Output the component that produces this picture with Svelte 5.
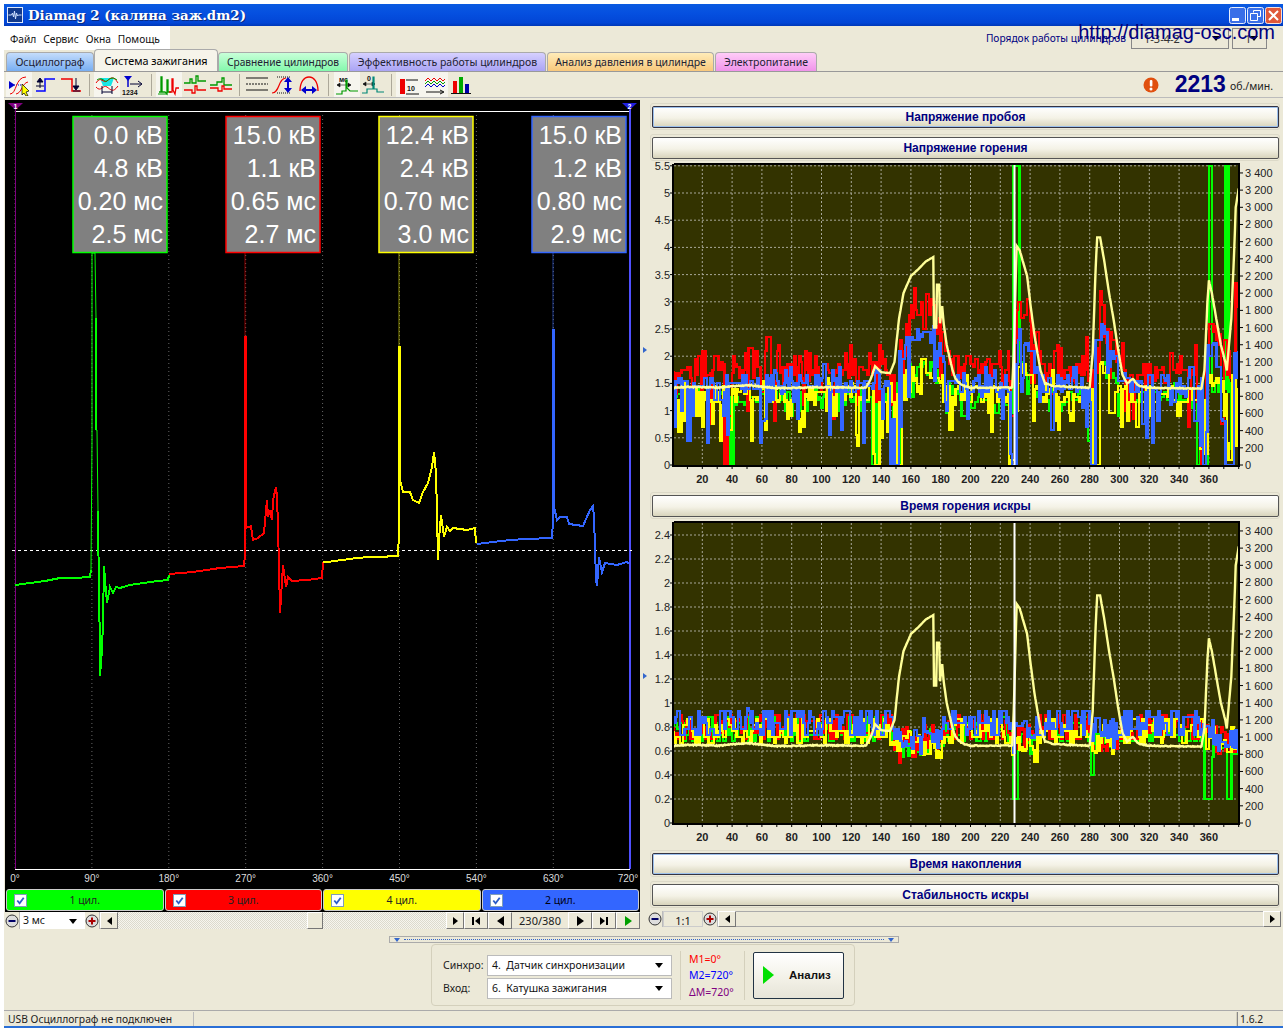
<script>
  function rng(seed) {
    let a = seed;
    return () => {
      a |= 0; a = (a + 0x6d2b79f5) | 0;
      let t = Math.imul(a ^ (a >>> 15), 1 | a);
      t = (t + Math.imul(t ^ (t >>> 7), 61 | t)) ^ t;
      return ((t ^ (t >>> 14)) >>> 0) / 4294967296;
    };
  }
  const rpmPts = [[1,900],[10,910],[30,900],[50,930],[70,895],[100,905],[130,900],[133,1000],[136,1150],[140,1080],[146,1070],[149,1200],[152,1700],[155,2000],[160,2200],[165,2280],[170,2370],[175,2420],[175.5,1600],[177,1600],[177.5,2100],[179,2100],[179.5,1650],[181,1850],[182,1650],[184,1400],[188,1100],[190,1000],[194,930],[200,900],[228,900],[229,1300],[231,2550],[233,2500],[238,2200],[240,1900],[243,1500],[247,1100],[250,950],[255,920],[280,900],[282,1300],[284,2300],[285,2650],[287,2650],[290,2350],[293,2000],[296,1700],[299,1350],[302,1050],[305,950],[309,1000],[313,920],[320,900],[355,890],[357,1100],[359,1900],[360,2150],[362,2000],[365,1700],[368,1400],[371,1200],[372,1100],[375,1700],[377,2500],[378,3000],[380,3220]];
  function rpm(i) {
    for (let k = 1; k < rpmPts.length; k++) {
      const [a, b] = rpmPts[k - 1], [c, d] = rpmPts[k];
      if (i <= c) return b + ((d - b) * (i - a)) / (c - a || 1);
    }
    return 3220;
  }
  const px = (i) => +(673.5 + 1.49 * i).toFixed(1);
  const inR = (i, rs) => rs.some(([a, b]) => i >= a && i <= b);

  function gen1(seed, s) {
    const r = rng(seed);
    let d = 'M' + px(1) + ' ' + (465 - s.base * 54.4).toFixed(0);
    let v = s.base;
    for (let i = 1; i <= 380; i++) {
      if (i === 1 || r() < 0.72) {
        v = s.base + (r() - 0.5) * s.spread;
        if (r() < s.upP) v += r() * s.up;
        const rough = inR(i, [[128, 156], [278, 287], [225, 231], [352, 358], [368, 380]]);
        if (r() < (rough ? s.downP * 2.4 : s.downP)) v -= r() * (rough ? 1.6 : s.down);
        v += (Math.max(0, rpm(i) - 1000) / 1500) * s.hump;
      }
      let out = v;
      for (const [a, b, val] of s.set) if (i >= a && i <= b) out = val;
      out = Math.max(0, Math.min(5.5, out));
      const y = (465 - Math.round(out * 20) / 20 * 54.4).toFixed(0);
      d += 'H' + px(i) + 'V' + y;
    }
    return d;
  }
  function gen2(seed, s) {
    const r = rng(seed);
    let d = 'M' + px(1) + ' ' + (823 - s.base * 120).toFixed(0);
    let v = s.base;
    for (let i = 1; i <= 380; i++) {
      if (r() < 0.7) {
        v = s.base + (Math.floor(r() * 5) - 2) * 0.05;
        if (inR(i, [[146, 180], [228, 243], [356, 380]])) v -= 0.04 + r() * 0.12;
        if (inR(i, [[280, 298]])) v -= 0.05 + r() * 0.07;
      }
      let out = v;
      for (const [a, b, val] of s.set) if (i >= a && i <= b) out = val;
      d += 'H' + px(i) + 'V' + (823 - out * 120).toFixed(0);
    }
    return d;
  }
  const rpmPath = (zero) => {
    const r = rng(91);
    let d = '';
    for (let i = 1; i <= 380; i += 0.5) {
      const flat = rpm(i) < 1000 ? (r() - 0.5) * 12 : 0;
      d += (d ? 'L' : 'M') + px(i) + ' ' + (zero - (rpm(i) + flat) / 200 * 17.18).toFixed(1);
    }
    return d;
  };
  const chart1 = [
    { c: '#00ff00', d: gen1(3, { base: 1.25, spread: 0.3, up: 0.2, upP: 0.1, down: 0.4, downP: 0.1, hump: 0.55, set: [[39, 40, 0], [229, 232, 5.5], [360, 361, 5.5], [371, 372, 5.5], [282, 286, 0]] }) },
    { c: '#ff0000', d: gen1(11, { base: 1.72, spread: 0.35, up: 0.5, upP: 0.35, down: 1.0, downP: 0.2, hump: 1.25, set: [[35, 36, 0], [282, 283, 0]] }) },
    { c: '#ffff00', d: gen1(23, { base: 1.3, spread: 0.35, up: 0.3, upP: 0.15, down: 0.8, downP: 0.22, hump: 0.45, set: [[283, 286, 0], [136, 138, 0], [152, 153, 0], [373, 375, 0.1]] }) },
    { c: '#3366ff', d: gen1(37, { base: 1.5, spread: 0.35, up: 0.3, upP: 0.15, down: 1.1, downP: 0.22, hump: 1.0, set: [[228, 230, 0], [149, 151, 0], [281, 283, 0], [356, 356, 0], [371, 376, 0]] }) }
  ];
  const chart2 = [
    { c: '#00ff00', d: gen2(5, { base: 0.78, set: [[229, 231, 0.2], [357, 361, 0.2], [372, 374, 0.2], [281, 282, 0.4]] }) },
    { c: '#ff0000', d: gen2(13, { base: 0.8, set: [[152, 152, 0.5]] }) },
    { c: '#ffff00', d: gen2(29, { base: 0.77, set: [] }) },
    { c: '#3366ff', d: gen2(41, { base: 0.83, set: [[50, 50, 0.96]] }) }
  ];
  const rpmA = rpmPath(465), rpmB = rpmPath(823);

  const xLabels = Array.from({ length: 18 }, (_, k) => 20 + k * 20);
  const xTicks = Array.from({ length: 38 }, (_, k) => 10 + k * 10);
  const rLabels = Array.from({ length: 18 }, (_, k) => {
    const v = k * 200;
    return { v, t: v >= 1000 ? Math.floor(v / 1000) + ' ' + String(v % 1000).padStart(3, '0') : String(v) };
  });
  const left1 = ['0', '0.5', '1', '1.5', '2', '2.5', '3', '3.5', '4', '4.5', '5', '5.5'];
  const left2 = ['0', '0.2', '0.4', '0.6', '0.8', '1', '1.2', '1.4', '1.6', '1.8', '2', '2.2', '2.4'];
  const charts = [
    { box: '650 160 633 330', top: 165, zero: 465, series: chart1, rp: rpmA, labels: left1, step: 27.2 },
    { box: '650 518 633 330', top: 523, zero: 823, series: chart2, rp: rpmB, labels: left2, step: 24 }
  ];

  const degs = [0, 90, 180, 270, 360, 450, 540, 630, 720];
  const degX = (k) => 15 + k * 76.9;
  const boxes = [
    { x: 73, c: '#00ff00', l: ['0.0 кВ', '4.8 кВ', '0.20 мс', '2.5 мс'] },
    { x: 226, c: '#ff0000', l: ['15.0 кВ', '1.1 кВ', '0.65 мс', '2.7 мс'] },
    { x: 379, c: '#ffff00', l: ['12.4 кВ', '2.4 кВ', '0.70 мс', '3.0 мс'] },
    { x: 532, c: '#3366ff', l: ['15.0 кВ', '1.2 кВ', '0.80 мс', '2.9 мс'] }
  ];
  const traces = [
    { c: '#00ff00', o: 1, thin: '91,570 92,440 92,253 95,253 96,318 96,430 97,430 98,511', p: 'M15,585 30,583 45,581 60,578 75,578 90,577 91,570 M96,318 96,430 M98,511 99,600 100,643 100,676 102,650 103,620 104,566 105,580 107,603 110,587 113,593 116,587 120,588 130,585 150,582 168,580 169,575' },
    { c: '#ff0000', o: 0.55, thin: '245,337 245,253', p: 'M169,574 193,572 220,568 244,566 245,555 245,337 246,337 246,507 246,528 251,526 253,540 258,538 264,533 267,500 268,517 270,510 272,520 273,500 276,487 277,497 278,527 279,566 280,613 283,565 286,587 288,577 292,581 307,580 322,578 323,562' },
    { c: '#ffff00', o: 0.55, thin: '399,347 399,253', p: 'M323,562 327,562 357,558 370,557 383,557 392,556 398,556 399,533 399,347 400,347 400,480 403,492 410,492 413,500 419,503 423,492 428,483 432,467 434,452 436,473 437,513 438,560 439,540 441,515 444,537 447,527 450,531 453,528 467,530 475,528 476,543' },
    { c: '#3366ff', o: 0.55, thin: '553,330 553,253', p: 'M477,544 493,542 510,540 527,539 552,538 553,520 553,330 554,330 554,507 557,520 560,517 567,517 569,524 583,526 590,510 593,506 594,517 595,547 596,580 597,586 599,557 602,572 605,563 617,565 627,562 629,564' }
  ];
  const channels = [
    { n: '1 цил.', cls: 'g' }, { n: '3 цил.', cls: 'r' }, { n: '4 цил.', cls: 'y' }, { n: '2 цил.', cls: 'b' }
  ];
</script>

<div class="win">
  <div class="title">
    <svg class="appicon" viewBox="0 0 16 16"><rect x=".5" y=".5" width="15" height="15" fill="#123a8c" stroke="#dfe8fa"/><path d="M1.500 8h3l1-2 1 4 1-6 1 8 1-6 1 3 1-1h3" fill="none" stroke="#cfe0ff"/></svg>
    <span class="ttext">Diamag 2 (калина заж.dm2)</span>
    <span class="wbtns">
      <svg class="wb" viewBox="0 0 17 17"><rect x=".5" y=".5" width="16" height="16" rx="2" fill="#3a6fe8" stroke="#e8eefc"/><rect x="3" y="11" width="7" height="3" fill="#fff"/></svg>
      <svg class="wb" viewBox="0 0 17 17"><rect x=".5" y=".5" width="16" height="16" rx="2" fill="#3a6fe8" stroke="#e8eefc"/><path d="M6.500 5.500V3.500h7v6h-3M3.500 6.500h7v7h-7z" fill="none" stroke="#fff"/></svg>
      <svg class="wb" viewBox="0 0 17 17"><rect x=".5" y=".5" width="16" height="16" rx="2" fill="#e0583a" stroke="#f6e0da"/><path d="M4 4l9 9M13 4l-9 9" stroke="#fff" stroke-width="2"/></svg>
    </span>
  </div>

  <div class="menurow">
    <div class="menu"><span>Файл</span><span>Сервис</span><span>Окна</span><span>Помощь</span></div>
    <div class="order">
      <span class="olabel">Порядок работы цилиндров</span>
      <span class="osel o1">1-3-4-2<b class="arr"></b></span>
      <span class="osel o2">1<b class="arr"></b></span>
    </div>
  </div>

  <div class="tabs">
    <span class="tab t1">Осциллограф</span>
    <span class="tab t2">Система зажигания</span>
    <span class="tab t3">Сравнение цилиндров</span>
    <span class="tab t4">Эффективность работы цилиндров</span>
    <span class="tab t5">Анализ давления в цилиндре</span>
    <span class="tab t6">Электропитание</span>
  </div>

  <div class="toolbar">
    <span class="tb on"><svg viewBox="0 0 24 22"><path d="M3 11h13" stroke="#00c" stroke-dasharray="1 1"/><path d="M2 7v8l6-4z" fill="#00c"/><path d="M3 20C10 20 8 3 19 3M9 20C15 19 15 9 21 8" fill="none" stroke="#e00"/><path d="M15 10l7 7-3 1 2 4-2 0-2-3-2 2z" fill="#ff0" stroke="#000" stroke-width=".7"/></svg></span>
    <span class="tb"><svg viewBox="0 0 24 22"><path d="M3 17h9V5h10" fill="none" stroke="#00f" stroke-width="1.500"/><path d="M7 14V6M4 8l3-4 3 4z" stroke="#003" fill="#003"/><path d="M3 12h8" stroke="#003"/></svg></span>
    <span class="tb"><svg viewBox="0 0 24 22"><path d="M2 5h11v12h9" fill="none" stroke="#e00" stroke-width="1.500"/><path d="M17 4v9M14 12l3 4 3-4z" stroke="#003" fill="#003"/><path d="M14 17h7" stroke="#003"/></svg></span>
    <i class="sep"></i>
    <span class="tb on"><svg viewBox="0 0 24 22"><path d="M5 4h14l-3 8h-8z" fill="#19e6e6"/><path d="M1 9C6 1 8 10 12 7s6-6 11 2" fill="none" stroke="#e00"/><path d="M1 13c5 6 7-3 11 0s6 6 11-1" fill="none" stroke="#e00"/><path d="M2 6c5-4 8 3 10 1s5-5 10-1" fill="none" stroke="#090"/><path d="M7 12v8M17 12v8M7 18h10" stroke="#003"/></svg></span>
    <span class="tb"><svg viewBox="0 0 24 22"><path d="M3 2h8L7 7z" fill="#00c"/><path d="M7 6v7" stroke="#00c" stroke-width="1.500"/><path d="M9 10h11M17 7l4 3-4 3" stroke="#003" fill="none"/><text x="1" y="20.500" class="icotxt">1234</text></svg></span>
    <i class="sep"></i>
    <span class="tb on"><svg viewBox="0 0 24 22"><path d="M2 18h2V3h1v15h3l2 2V6h1v12h3" fill="none" stroke="#090" stroke-width="1.300"/><path d="M12 18h3V5h1v11l2 4 1-6h3" fill="none" stroke="#e00" stroke-width="1.300"/><path d="M1 20h9" stroke="#090"/></svg></span>
    <span class="tb"><svg viewBox="0 0 24 22"><path d="M1 9h6V5h2v4h4V2h2v5h8" fill="none" stroke="#090" stroke-width="1.300"/><path d="M1 16h8v3h3v-7h2v4h9" fill="none" stroke="#e00" stroke-width="1.300"/></svg></span>
    <span class="tb"><svg viewBox="0 0 24 22"><path d="M1 11h7v-3h5V4h2v7h8" fill="none" stroke="#090" stroke-width="1.300"/><path d="M1 14h8v3h4v-5h2v3h8" fill="none" stroke="#e00" stroke-width="1.300"/></svg></span>
    <i class="sep"></i>
    <span class="tb"><svg viewBox="0 0 24 22"><path d="M1 4h22M1 16h22" stroke="#111"/><path d="M1 10h22" stroke="#111" stroke-dasharray="2 1"/></svg></span>
    <span class="tb"><svg viewBox="0 0 24 22"><path d="M1 19c8 0 6-15 14-15" fill="none" stroke="#e00" stroke-width="1.200"/><path d="M6 3h14M6 19h14" stroke="#111" stroke-dasharray="1 1"/><path d="M17 6v10" stroke="#00c" stroke-width="2"/><path d="M13 8l4-5 4 5zM13 14l4 5 4-5z" fill="#00c"/></svg></span>
    <span class="tb"><svg viewBox="0 0 24 22"><path d="M3 17C3 8 7 3 12 3s9 5 9 14" fill="none" stroke="#e00" stroke-width="1.300"/><path d="M6 16h12" stroke="#00c" stroke-width="2"/><path d="M9 12l-5 4 5 4zM15 12l5 4-5 4z" fill="#00c"/></svg></span>
    <i class="sep wide"></i>
    <span class="tb on"><svg viewBox="0 0 24 22"><text x="4" y="8" class="icotxt">мс</text><path d="M2 11h14M2 11l3-2v4zM16 11l-3-2v4z" stroke="#111" fill="#111" stroke-width=".6"/><path d="M1 20h6v-3h4V6h1v8l3 3h8" fill="none" stroke="#090" stroke-width="1.200"/></svg></span>
    <span class="tb"><svg viewBox="0 0 24 22"><text x="6" y="7" class="icotxt">0</text><path d="M2 10h12M2 10l3-2v4zM14 10l-3-2v4z" stroke="#111" fill="#111" stroke-width=".6"/><path d="M1 19h5v-4h6V3h1v12h3v3h7" fill="none" stroke="#087" stroke-width="1.200"/></svg></span>
    <i class="sep"></i>
    <span class="tb on"><svg viewBox="0 0 24 22"><rect x="3" y="5" width="5" height="15" fill="#e00"/><path d="M9 6h12M9 20h13" stroke="#111"/><text x="10" y="17" class="icotxt">10</text></svg></span>
    <span class="tb on"><svg viewBox="0 0 24 22"><path d="M2 7l3-3 3 3 3-3 3 3 3-3 3 3 2-2" fill="none" stroke="#e00"/><path d="M2 10l3-3 3 3 3-3 3 3 3-3 3 3 2-2" fill="none" stroke="#090"/><path d="M2 13l3-3 3 3 3-3 3 3 3-3 3 3 2-2" fill="none" stroke="#00c"/><path d="M3 18h17M17 16l4 2-4 2" fill="none" stroke="#111"/></svg></span>
    <span class="tb"><svg viewBox="0 0 24 22"><rect x="4" y="7" width="4" height="12" fill="#e00"/><rect x="10" y="3" width="4" height="16" fill="#0a0"/><rect x="16" y="10" width="4" height="9" fill="#00a"/><path d="M2 19.500h20" stroke="#111"/></svg></span>
    <span class="rpm">
      <svg class="alert" viewBox="0 0 16 16"><circle cx="8" cy="8" r="7.500" fill="#e0500f"/><rect x="6.800" y="3" width="2.600" height="6.500" rx="1" fill="#fff"/><circle cx="8" cy="12" r="1.500" fill="#fff"/></svg>
      <b>2213</b><span>об./мин.</span>
    </span>
  </div>

  <div class="main">
    <div class="leftcol">
      <svg class="scope" viewBox="5 100 635 789">
        <rect x="5" y="100" width="635" height="789" fill="#000"/>
        {#each degs as d, k}
          <path d="M{degX(k)} 111V869" class="gridv"/>
          <text x={k === 8 ? 628 : degX(k)} y="882" class="deg">{d}°</text>
        {/each}
        <path d="M15 111.500H630M15 869.500H630" stroke="#fff" fill="none"/>
        <path d="M15.500 103V869" stroke="#800080"/>
        <path d="M630 103V869" stroke="#5050ff" stroke-width="2"/>
        <path d="M8 103h15l-7.500 7z" fill="#800080"/>
        <text x="15.500" y="108.500" class="mk">1</text>
        <path d="M622 103h15l-7.500 7z" fill="#2020e0"/>
        <text x="629.500" y="108.500" class="mk">2</text>
        <path d="M12 550.500H632" stroke="#fff" stroke-dasharray="3 3"/>
        {#each traces as t}
          <polyline points={t.thin} fill="none" stroke={t.c} stroke-width="1" opacity={t.o}/>
          <path d={t.p} fill="none" stroke={t.c} stroke-width="2" shape-rendering="crispEdges"/>
        {/each}
        {#each boxes as b}
          <rect x={b.x} y="116.500" width="94" height="136" fill="#808080" stroke={b.c} stroke-width="1.500"/>
          {#each b.l as line, k}
            <text x={b.x + 90} y={144 + k * 33} class="val">{line}</text>
          {/each}
        {/each}
      </svg>
      <div class="channels">
        {#each channels as ch}
          <span class="ch {ch.cls}">
            <span class="check"><svg viewBox="0 0 12 12"><path d="M2.500 6l2.500 3 4.500-6" fill="none" stroke="#2a5cc8" stroke-width="2"/></svg></span>
            <span class="chn">{ch.n}</span>
          </span>
        {/each}
      </div>
      <div class="scrollrow">
        <span class="rnd"><svg viewBox="0 0 14 14"><circle cx="7" cy="7" r="6" fill="#ddd" stroke="#333"/><path d="M3.500 7h7" stroke="#006" stroke-width="2"/></svg></span>
        <span class="tsel">3 мс<b class="arr"></b></span>
        <span class="rnd"><svg viewBox="0 0 14 14"><circle cx="7" cy="7" r="6" fill="#ddd" stroke="#333"/><path d="M3.500 7h7M7 3.500v7" stroke="#a00" stroke-width="2"/></svg></span>
        <span class="sbtn sa"><i class="tl"></i></span>
        <span class="track"><span class="thumb"></span></span>
        <span class="sbtn sa"><i class="tr"></i></span>
        <span class="sbtn nav"><i class="bar"></i><i class="tl"></i></span>
        <span class="sbtn nav"><i class="tl big"></i></span>
        <span class="counter">230/380</span>
        <span class="sbtn nav"><i class="tr big"></i></span>
        <span class="sbtn nav"><i class="tr"></i><i class="bar"></i></span>
        <span class="sbtn nav"><i class="tr big gr"></i></span>
      </div>
    </div>

    <div class="vsplit"><i class="tr blue"></i><i class="tr blue"></i></div>

    <div class="rightcol">
      <div class="grp first"><div class="bar3d focus">Напряжение пробоя</div></div>
      <div class="grp"><div class="bar3d">Напряжение горения</div></div>
      {#each charts as ch, ci}
        <svg class="chart" viewBox={ch.box}>
          <rect x="675" y={ch.top} width="565" height="300" fill="#333300"/>
          {#each xLabels as v}
            <path d="M{px(v)} {ch.top}V{ch.zero}" class="grid"/>
            <text x={px(v)} y={ch.zero + 18} class="xl">{v}</text>
          {/each}
          {#each ch.labels as l, k}
            {#if k > 0}<path d="M675 {ch.zero - k * ch.step}H1240" class="grid"/>{/if}
            <text x="671" y={ch.zero - k * ch.step + 4} class="ll">{l}</text>
            <path d="M671 {ch.zero - k * ch.step}h4" stroke="#000"/>
          {/each}
          {#each xTicks as v}
            <path d="M{px(v)} {ch.zero}v4" stroke="#000"/>
          {/each}
          {#each ch.series as s}
            <path d={s.d} fill="none" stroke={s.c} stroke-width="2.500" shape-rendering="crispEdges"/>
          {/each}
          <path d={ch.rp} fill="none" stroke="#ffff99" stroke-width="2.400"/>
          <path d="M1015.500 {ch.top}V{ch.zero}" stroke="#fff" stroke-width="2"/>
          <path d="M675 {ch.top - 1}H1240V{ch.zero + 1}H674V{ch.top - 1}" fill="none" stroke="#000" stroke-width="2"/>
          {#each rLabels as r}
            <path d="M1240 {ch.zero - (r.v / 200) * 17.18}h4" stroke="#000"/>
            <text x="1246" y={ch.zero - (r.v / 200) * 17.18 + 4} class="rl">{r.t}</text>
          {/each}
        </svg>
        {#if ci === 0}
          <div class="grp"><div class="bar3d">Время горения искры</div></div>
        {/if}
      {/each}
      <div class="grp"><div class="bar3d focus">Время накопления</div></div>
      <div class="grp"><div class="bar3d">Стабильность искры</div></div>
      <div class="scrollrow rscroll">
        <span class="rnd"><svg viewBox="0 0 14 14"><circle cx="7" cy="7" r="6" fill="#ddd" stroke="#333"/><path d="M3.500 7h7" stroke="#006" stroke-width="2"/></svg></span>
        <span class="ratio">1:1</span>
        <span class="rnd"><svg viewBox="0 0 14 14"><circle cx="7" cy="7" r="6" fill="#ddd" stroke="#333"/><path d="M3.500 7h7M7 3.500v7" stroke="#a00" stroke-width="2"/></svg></span>
        <span class="sbtn sa"><i class="tl"></i></span>
        <span class="track plain"></span>
        <span class="sbtn sa"><i class="tr"></i></span>
      </div>
    </div>
  </div>

  <div class="hsplit"><i class="dn"></i><span class="dots"></span><i class="dn"></i></div>

  <div class="panelrow">
    <div class="panel">
      <div class="selects">
        <div class="srow"><label for="s1">Синхро:</label><span id="s1" class="pick">4.&nbsp; Датчик синхронизации<b class="arr"></b></span></div>
        <div class="srow"><label for="s2">Вход:</label><span id="s2" class="pick">6.&nbsp; Катушка зажигания<b class="arr"></b></span></div>
      </div>
      <div class="marks">
        <span class="m1">M1=0°</span>
        <span class="m2">M2=720°</span>
        <span class="m3">ΔM=720°</span>
      </div>
      <div class="go"><i class="play"></i><b>Анализ</b></div>
    </div>
  </div>

  <div class="status">
    <span class="s1">USB Осциллограф не подключен</span>
    <span class="s2"></span>
    <span class="s3">1.6.2</span>
  </div>

  <span class="wm">http://diamag-osc.com</span>
</div>

<style>
  :global(*) { box-sizing: border-box; }
  :global(body) { margin: 0; background: #fff; }
  .win {
    position: relative;
    margin: 4px 0 0 4px;
    width: 1279px;
    height: 1024px;
    display: flex;
    flex-direction: column;
    background: #ece9d8;
    border-bottom: 2px solid #2a6fd6;
    font: 11px "Noto Sans", sans-serif;
    color: #111;
    overflow: hidden;
  }
  .title {
    height: 22px;
    flex: none;
    display: flex;
    align-items: center;
    padding: 0 1px 0 3px;
    background: linear-gradient(#0a5ae0 0%, #0550e0 40%, #0246d6 85%, #0038b8 100%);
  }
  .appicon { width: 16px; height: 16px; }
  .ttext {
    margin-left: 5px;
    font: bold 13.400px "DejaVu Serif", serif;
    color: #fff;
    text-shadow: 1px 1px 0 #0a2a80;
  }
  .wbtns { margin-left: auto; display: flex; gap: 1px; }
  .wb { width: 17px; height: 17px; }

  .menurow { height: 24px; flex: none; display: flex; justify-content: space-between; }
  .menu {
    width: 166px;
    background: #fff;
    display: flex;
    gap: 7px;
    align-items: center;
    padding: 1px 0 0 6px;
    font-size: 10.200px;
  }
  .order { display: flex; align-items: center; padding-right: 16px; }
  .olabel { color: #000080; margin-right: 5px; font-size: 10.200px; }
  .osel {
    position: relative;
    height: 21px;
    background: #ece9d8;
    border: 1px solid #888;
    display: flex;
    align-items: center;
    padding-left: 12px;
    color: #333;
  }
  .o1 { width: 98px; margin-right: 3px; }
  .o2 { width: 35px; }
  .arr {
    position: absolute;
    right: 8px;
    top: 50%;
    margin-top: -2px;
    border: 4px solid transparent;
    border-top: 5px solid #000;
    border-bottom: 0;
  }

  .tabs { height: 22px; flex: none; display: flex; align-items: flex-end; padding-left: 2px; border-bottom: 1px solid #999; }
  .tab {
    height: 19px;
    border: 1px solid #aaa;
    border-bottom: 0;
    border-radius: 4px 4px 0 0;
    display: flex;
    align-items: center;
    justify-content: center;
    font-size: 10.500px;
    color: #223;
    flex: none;
  }
  .t1 { width: 88px; background: linear-gradient(#c4dcfb, #78aef2); }
  .t2 { width: 124px; height: 22px; background: #f6f4ea; color: #000; font-size: 10.800px; }
  .t3 { width: 130px; background: linear-gradient(#c8ffd8, #84f8ac); font-size: 10.200px; }
  .t4 { width: 197px; margin-left: 1px; background: linear-gradient(#d6d0ff, #aaa4f4); }
  .t5 { width: 167px; margin-left: 1px; background: linear-gradient(#ffecb8, #f8c87c); }
  .t6 { width: 102px; margin-left: 1px; background: linear-gradient(#ffccf8, #f094ea); }

  .toolbar {
    height: 26px;
    flex: none;
    display: flex;
    align-items: center;
    padding-left: 2px;
    border-bottom: 1px solid #bbb;
  }
  .tb { width: 26px; height: 25px; display: flex; align-items: center; justify-content: center; flex: none; }
  .tb svg { width: 24px; height: 22px; }
  .tb.on { background: #f6f5ee; }
  .sep { width: 10px; height: 22px; flex: none; background: linear-gradient(#aca899, #aca899) center / 1px 100% no-repeat; }
  .sep.wide { width: 12px; }
  .icotxt { font: bold 7px "Liberation Sans", sans-serif; fill: #111; }
  .rpm { margin-left: auto; display: flex; align-items: center; padding-right: 10px; }
  .alert { width: 16px; height: 16px; margin-right: 16px; }
  .rpm b { font: bold 23px "Liberation Sans", sans-serif; color: #000080; margin-right: 4px; }
  .rpm span { font-size: 10.500px; color: #222; margin-top: 3px; }

  .main { height: 833px; flex: none; margin-top: 2px; display: flex; }
  .leftcol { width: 635px; margin-left: 1px; flex: none; display: flex; flex-direction: column; }
  .scope { display: block; width: 635px; height: 789px; flex: none; }
  .gridv { stroke: #666; stroke-dasharray: 1 3; fill: none; }
  .deg { font: 10px "Liberation Sans", sans-serif; fill: #ddd; text-anchor: middle; }
  .mk { font: bold 7px "Liberation Sans", sans-serif; fill: #fff; text-anchor: middle; }
  .val { font: 25px "Liberation Sans", sans-serif; fill: #fff; text-anchor: end; }

  .channels { height: 23px; flex: none; background: #000; display: flex; padding: 0 1px; gap: 1px; }
  .ch {
    flex: 1;
    height: 22px;
    border: 1px solid #ccc;
    border-radius: 3px;
    display: flex;
    align-items: center;
    padding-left: 7px;
    font-size: 10.500px;
    color: #222;
  }
  .g { background: #00ff00; } .r { background: #ff0000; } .y { background: #ffff00; } .b { background: #3366ff; color: #001; }
  .check { width: 13px; height: 13px; background: #fff; border: 1px solid #7f9db9; display: flex; flex: none; }
  .chn { flex: 1; text-align: center; padding-right: 20px; }

  .scrollrow { height: 17px; flex: none; display: flex; align-items: stretch; }
  .rnd { width: 15px; flex: none; display: flex; align-items: center; justify-content: center; background: #ece9d8; border-right: 1px solid #bbb; }
  .rnd svg { width: 14px; height: 14px; }
  .tsel { position: relative; width: 65px; flex: none; background: #fff; padding: 1px 0 0 3px; font-size: 10.500px; }
  .sbtn {
    flex: none;
    display: flex;
    align-items: center;
    justify-content: center;
    gap: 1px;
    background: #ece9d8;
    border: 1px solid;
    border-color: #fff #777 #777 #fff;
  }
  .sa { width: 18px; }
  .nav { width: 24px; }
  .tl { border: 4px solid transparent; border-right: 5px solid #000; border-left: 0; }
  .tr { border: 4px solid transparent; border-left: 5px solid #000; border-right: 0; }
  .big { border-width: 5px; border-right-width: 7px; }
  .tr.big { border-width: 5px 0 5px 7px; }
  .gr { border-left-color: #00a000; }
  .bar { width: 2px; height: 8px; background: #000; }
  .track {
    flex: 1;
    display: flex;
    padding-left: 189px;
    background: repeating-conic-gradient(#f6f5ef 0 25%, #dcdacd 0 50%) 0 0 / 2px 2px;
  }
  .track.plain { background: #ece9d8; border: 1px solid #aaa; border-width: 1px 0; }
  .thumb { width: 16px; background: #ece9d8; border: 1px solid; border-color: #fff #777 #777 #fff; }
  .counter { width: 56px; flex: none; text-align: center; padding-top: 1px; color: #222; border-bottom: 1px solid #bbb; }

  .vsplit {
    width: 9px;
    flex: none;
    display: flex;
    flex-direction: column;
    align-items: center;
    justify-content: center;
    gap: 320px;
    padding-bottom: 8px;
  }
  .blue { border-left-color: #3366cc; border-width: 3px 0 3px 4px; }

  .rightcol { flex: 1; min-width: 0; display: flex; flex-direction: column; padding-top: 3px; padding-left: 1px; }
  .grp { height: 27px; flex: none; border: 1px solid #dcd9c8; border-radius: 3px; padding: 2px 0 0 1px; margin: 2px 3px 2px 0; width: 630px; }
  .grp + .chart { margin-top: -3px; }
  .first { margin-top: 0; }
  .bar3d {
    height: 22px;
    border: 1px solid #555;
    border-radius: 2px;
    background: linear-gradient(#fff, #f4f2e6 55%, #d8d4bc);
    text-align: center;
    font: bold 12px/20px "Liberation Sans", sans-serif;
    color: #000080;
    width: 627px;
  }
  .focus { box-shadow: inset 0 0 0 1px #9cc0ec; border-color: #334; }
  .chart { display: block; flex: none; width: 633px; height: 330px; margin-left: -1px; }
  .grid { stroke: #a8a898; stroke-width: 1; stroke-dasharray: 2 2; fill: none; }
  .xl { font: bold 11px "Liberation Sans", sans-serif; fill: #222; text-anchor: middle; }
  .ll { font: 11px "Liberation Sans", sans-serif; fill: #222; text-anchor: end; }
  .rl { font: 11px "Liberation Sans", sans-serif; fill: #222; }
  .rscroll { width: 633px; margin-top: 1px; margin-left: -2px; height: 16px; }
  .ratio { width: 40px; flex: none; text-align: center; padding-top: 1px; border: 1px solid #ccc; }

  .hsplit {
    margin: 3px 0 0 385px;
    width: 510px;
    height: 7px;
    flex: none;
    border: 1px solid #aaa;
    display: flex;
    align-items: center;
    padding: 0 4px;
    gap: 4px;
  }
  .dots { flex: 1; border-top: 1px dotted #3366cc; }
  .dn { border: 3px solid transparent; border-top: 4px solid #3366cc; border-bottom: 0; }

  .panelrow { height: 62px; flex: none; display: flex; padding-left: 427px; margin-top: 1px; }
  .panel {
    width: 424px;
    border: 1px solid #d4d0bc;
    border-radius: 4px;
    display: flex;
    align-items: center;
    padding-left: 11px;
  }
  .selects { display: flex; flex-direction: column; gap: 2px; width: 230px; flex: none; margin-top: 3px; }
  .srow { display: flex; align-items: center; }
  .srow label { width: 44px; font-size: 10.500px; color: #222; }
  .pick {
    position: relative;
    width: 185px;
    height: 21px;
    background: #fff;
    border: 1px solid #bbb;
    padding: 2px 0 0 4px;
    font-size: 10.500px;
    color: #111;
  }
  .marks {
    width: 65px;
    height: 49px;
    flex: none;
    margin-left: 7px;
    border: 1px solid #d4d0bc;
    border-width: 0 1px;
    display: flex;
    flex-direction: column;
    justify-content: space-between;
    padding-left: 8px;
    font-size: 10.500px;
    line-height: 16px;
  }
  .m1 { color: #f00; } .m2 { color: #00f; } .m3 { color: #800080; }
  .go {
    width: 91px;
    height: 47px;
    margin-left: 8px;
    border: 1px solid #234;
    border-radius: 2px;
    background: linear-gradient(#fff, #f2f0e6 60%, #e6e4d8);
    display: flex;
    align-items: center;
    padding-left: 9px;
  }
  .play { border: 9px solid transparent; border-left: 11px solid #00e000; border-right: 0; }
  .go b { margin-left: 15px; font: bold 11.500px "Liberation Sans", sans-serif; }

  .status { margin-top: 4px; flex: 1; display: flex; border-top: 1px solid #aaa; padding-top: 1px; font-size: 10.300px; color: #222; }
  .s1 { width: 190px; flex: none; padding-left: 4px; border-right: 1px solid #bbb; }
  .s2 { flex: 1; margin-left: 2px; border: 1px solid #d4d0bc; border-width: 0 1px 0 0; }
  .s3 { width: 46px; flex: none; padding-left: 2px; border-left: 1px solid #888; }

  .wm {
    position: absolute;
    right: 8px;
    top: 17px;
    font: 20px "Liberation Sans", sans-serif;
    color: #000080;
    pointer-events: none;
  }
</style>
